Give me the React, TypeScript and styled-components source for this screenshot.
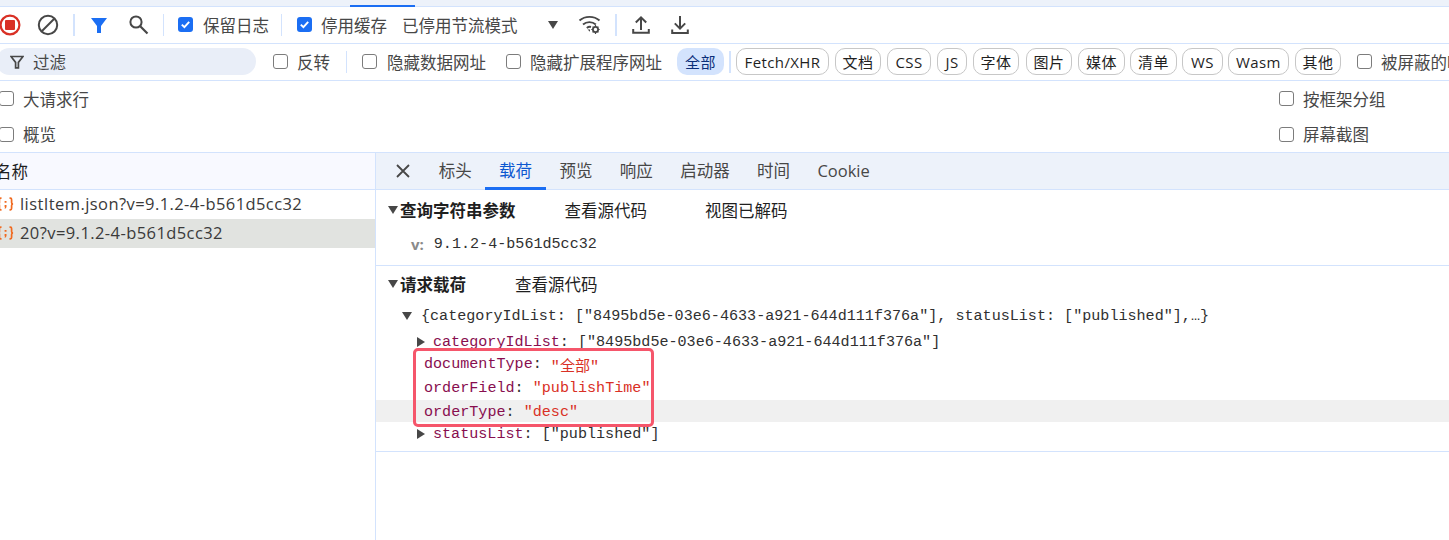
import React from "react";
import styled, { createGlobalStyle } from "styled-components";

const UI_FONT = `"Open Sans", "Noto Sans CJK SC", sans-serif`;
const MONO_FONT = `"Liberation Mono", "Noto Sans CJK SC", monospace`;

const GlobalStyle = createGlobalStyle`
  html, body { margin: 0; padding: 0; background: #fff; }
  body { font-family: ${UI_FONT}; font-size: 16.5px; color: #474747; }
`;

const Page = styled.div`
  width: 1449px;
  height: 540px;
  overflow: hidden;
  display: flex;
  flex-direction: column;
`;

const TopStrip = styled.div`
  height: 6px;
  flex: none;
  background: #edf2fa;
  border-bottom: 1px solid #d3e3fd;
`;

const TopMarker = styled.div`
  width: 65px;
  height: 2px;
  margin-left: 350px;
  padding-top: 5px;
  background: linear-gradient(#edf2fa 5px, #1b6ef3 5px);
`;

const Bar = styled.div`
  display: flex;
  align-items: center;
  flex: none;
  white-space: nowrap;
  height: 37px;
  box-sizing: border-box;
  padding-bottom: 1px;
  border-bottom: 1px solid #d3e3fd;
`;

const IconSlot = styled.span<{ $ml?: number; $w: number }>`
  display: flex;
  align-items: center;
  justify-content: center;
  flex: none;
  width: ${(p) => p.$w}px;
  margin-left: ${(p) => p.$ml ?? 0}px;
`;

const Sep = styled.span<{ $ml: number; $w?: number }>`
  flex: none;
  width: ${(p) => p.$w ?? 1}px;
  height: 22px;
  margin-left: ${(p) => p.$ml}px;
  background: #d3e3fd;
`;

const Box = styled.span<{ $on?: boolean; $ml?: number }>`
  display: flex;
  align-items: center;
  justify-content: center;
  flex: none;
  box-sizing: border-box;
  width: 15px;
  height: 15px;
  margin-left: ${(p) => p.$ml ?? 0}px;
  border-radius: 3px;
  border: ${(p) => (p.$on ? "none" : "1.5px solid #7c7c7c")};
  background: ${(p) => (p.$on ? "#1b6ef3" : "#fff")};
`;

const Label = styled.span<{ $ml?: number }>`
  margin-left: ${(p) => p.$ml ?? 9}px;
  color: #474747;
`;

const FilterInput = styled.div`
  display: flex;
  align-items: center;
  flex: none;
  box-sizing: border-box;
  width: 260px;
  height: 27px;
  margin-left: -4px;
  padding-left: 14px;
  border-radius: 14px;
  background: #e9eef8;
`;

const Pill = styled.span<{ $w: number; $ml?: number; $active?: boolean }>`
  display: flex;
  align-items: center;
  justify-content: center;
  flex: none;
  box-sizing: border-box;
  height: 27px;
  width: ${(p) => p.$w}px;
  margin-left: ${(p) => p.$ml ?? 6}px;
  border-radius: 10px;
  font-size: 15px;
  letter-spacing: 0.4px;
  color: ${(p) => (p.$active ? "#0b2f7a" : "#1f1f1f")};
  background: ${(p) => (p.$active ? "#d3e3fd" : "#fff")};
  border: ${(p) => (p.$active ? "none" : "1px solid #c7c7c7")};
`;

const OptionRow = styled.div<{ $h: number }>`
  display: flex;
  align-items: center;
  justify-content: space-between;
  flex: none;
  height: ${(p) => p.$h}px;
  padding-right: 62px;
`;

const OptionGroup = styled.div<{ $ml?: number }>`
  display: flex;
  align-items: center;
  width: 108px;
  white-space: nowrap;
  margin-left: ${(p) => p.$ml ?? 0}px;
`;

const Main = styled.div`
  display: flex;
  flex: 1;
  min-height: 0;
  border-top: 1px solid #d3e3fd;
`;

const NamesPane = styled.div`
  width: 376px;
  flex: none;
  box-sizing: border-box;
  border-right: 1px solid #d3e3fd;
`;

const NamesHeader = styled.div`
  height: 36px;
  box-sizing: border-box;
  display: flex;
  align-items: center;
  padding-bottom: 1px;
  background: #f8f9ff;
  color: #1f1f1f;
  & > span { margin-left: -5px; }
  border-bottom: none;
  margin-bottom: 1px;
  box-shadow: 0 1px 0 #d3e3fd;
`;

const RequestRow = styled.div<{ $selected?: boolean }>`
  display: flex;
  align-items: center;
  box-sizing: border-box;
  height: 29px;
  padding-bottom: 2px;
  white-space: nowrap;
  letter-spacing: 0.42px;
  color: #3a3a3a;
  background: ${(p) => (p.$selected ? "#e1e3e0" : "#fff")};
  & > svg { margin-left: -3px; flex: none; }
  & > span { margin-left: 6px; }
`;

const DetailPane = styled.div`
  flex: 1;
  min-width: 0;
  position: relative;
`;

const TabBar = styled.div`
  display: flex;
  align-items: stretch;
  height: 36px;
  background: #edf2fa;
  border-bottom: 1px solid #d3e3fd;
`;

const CloseSlot = styled.span`
  display: flex;
  align-items: center;
  justify-content: center;
  width: 49px;
  padding-left: 5px;
  flex: none;
  box-sizing: border-box;
`;

const Tab = styled.span<{ $active?: boolean }>`
  display: flex;
  align-items: center;
  box-sizing: border-box;
  padding: 0 13.7px;
  height: 37px;
  color: ${(p) => (p.$active ? "#0b57d0" : "#474747")};
  border-bottom: 3px solid ${(p) => (p.$active ? "#1b6ef3" : "transparent")};
`;

const Section = styled.section<{ $pb: number }>`
  border-bottom: 1px solid #d3e3fd;
  padding-bottom: ${(p) => p.$pb}px;
`;

const SectionHead = styled.div<{ $h: number }>`
  display: flex;
  align-items: center;
  height: ${(p) => p.$h}px;
  padding-left: 12px;
  white-space: nowrap;
`;

const Triangle = styled.span<{ $dir: "down" | "right" }>`
  flex: none;
  width: 0;
  height: 0;
  ${(p) =>
    p.$dir === "down"
      ? `border-left: 5px solid transparent; border-right: 5px solid transparent; border-top: 8px solid #474747;`
      : `border-top: 5px solid transparent; border-bottom: 5px solid transparent; border-left: 8px solid #474747;`}
`;

const HeadTitle = styled.b`
  font-weight: 700;
  color: #1f1f1f;
  margin-left: 2px;
`;

const HeadLink = styled.span<{ $ml: number }>`
  margin-left: ${(p) => p.$ml}px;
  color: #1f1f1f;
`;

const TreeRow = styled.div<{ $h?: number; $mt?: number; $indent: number; $hl?: boolean }>`
  display: flex;
  align-items: center;
  box-sizing: border-box;
  height: ${(p) => p.$h ?? 22}px;
  margin-top: ${(p) => p.$mt ?? 0}px;
  padding-left: ${(p) => p.$indent}px;
  padding-top: ${(p) => (p.$hl ? 2 : 0)}px;
  white-space: nowrap;
  font-family: ${MONO_FONT};
  font-size: 15.1px;
  color: #303030;
  background: ${(p) => (p.$hl ? "#f0f0f0" : "transparent")};
`;

const TreeText = styled.span<{ $ml?: number }>`
  margin-left: ${(p) => p.$ml ?? 0}px;
`;

const Key = styled.span`
  color: #880e4f;
`;

const Str = styled.span`
  color: #d93025;
`;

const ParamName = styled.b`
  font-family: ${UI_FONT};
  font-size: 15px;
  font-weight: 700;
  color: #8a8a8a;
  margin-right: 10px;
`;

const Annotation = styled.div`
  position: absolute;
  left: 37px;
  top: 195px;
  width: 241px;
  height: 79px;
  box-sizing: border-box;
  border: 3px solid #f5566b;
  border-radius: 5px;
  pointer-events: none;
`;

const Check = () => (
  <svg width="11" height="11" viewBox="0 0 11 11">
    <path d="M1.8 5.6 4.4 8.2 9.2 2.8" fill="none" stroke="#fff" strokeWidth="1.9" />
  </svg>
);

const StopIcon = () => (
  <svg width="22" height="22" viewBox="0 0 22 22" style={{ flex: "none" }}>
    <circle cx="11" cy="11" r="9.4" fill="none" stroke="#d93025" strokeWidth="2.2" />
    <rect x="6" y="6" width="10" height="10" rx="1" fill="#d93025" />
  </svg>
);

const ClearIcon = () => (
  <svg width="22" height="22" viewBox="0 0 22 22" style={{ flex: "none" }}>
    <circle cx="11" cy="11" r="9.2" fill="none" stroke="#474747" strokeWidth="2" />
    <path d="M5 17 17 5" stroke="#474747" strokeWidth="2" />
  </svg>
);

const FunnelFilled = () => (
  <svg width="18" height="18" viewBox="0 0 18 18">
    <path d="M1 2h16l-6 8v7H7v-7z" fill="#1b6ef3" />
  </svg>
);

const SearchIcon = () => (
  <svg width="21" height="21" viewBox="0 0 21 21">
    <circle cx="8" cy="8" r="5.6" fill="none" stroke="#474747" strokeWidth="2" />
    <path d="M12.2 12.2 19.5 19.5" stroke="#474747" strokeWidth="2.2" />
  </svg>
);

const WifiGearIcon = () => (
  <svg width="24" height="20" viewBox="0 0 24 20">
    <path d="M1.5 5.5C7 .6 16 .6 21.5 5.5" fill="none" stroke="#474747" strokeWidth="1.9" />
    <path d="M5 9.5c3.6-3.2 9.2-3.2 12.8 0" fill="none" stroke="#474747" strokeWidth="1.9" />
    <path d="M8.8 13c1.5-1.2 3-1.4 4.2-1" fill="none" stroke="#474747" strokeWidth="1.9" />
    <path d="M9.5 14.6h2.5v2.2z" fill="#474747" />
    <circle cx="17.5" cy="14.5" r="2.6" fill="none" stroke="#474747" strokeWidth="1.8" />
    <path d="M17.5 10v1.6M17.5 17.4V19M13.3 14.5h1.6M20.1 14.5h1.6M14.6 11.6l1 1M19.4 16.4l1 1M14.6 17.4l1-1M19.4 12.6l1-1" stroke="#474747" strokeWidth="1.2" />
  </svg>
);

const UploadIcon = () => (
  <svg width="18" height="20" viewBox="0 0 18 20">
    <path d="M9 15V2.5M3.8 7.5 9 2.3l5.2 5.2" fill="none" stroke="#474747" strokeWidth="2" />
    <path d="M1.2 14v3.8h15.6V14" fill="none" stroke="#474747" strokeWidth="2" />
  </svg>
);

const DownloadIcon = () => (
  <svg width="18" height="20" viewBox="0 0 18 20">
    <path d="M9 1v12.4M3.8 8.4 9 13.6l5.2-5.2" fill="none" stroke="#474747" strokeWidth="2" />
    <path d="M1.2 14.5v3.5h15.6v-3.5" fill="none" stroke="#474747" strokeWidth="2" />
  </svg>
);

const FunnelOutline = () => (
  <svg width="14" height="14" viewBox="0 0 14 14" style={{ flex: "none" }}>
    <path d="M1 1.5h12L8.4 7.4v5.4H5.6V7.4z" fill="none" stroke="#474747" strokeWidth="1.7" />
  </svg>
);

const CloseIcon = () => (
  <svg width="14" height="14" viewBox="0 0 14 14">
    <path d="M1 1 13 13M13 1 1 13" stroke="#474747" strokeWidth="1.8" />
  </svg>
);

const JsonIcon = () => (
  <svg width="17" height="16" viewBox="0 0 17 16">
    <path d="M4.5 2.2H3.6C2.6 2.2 2.4 2.8 2.4 3.8v2.6c0 1-.5 1.5-1.4 1.6.9.1 1.4.6 1.4 1.6v2.6c0 1 .2 1.6 1.2 1.6h.9" fill="none" stroke="#f06a20" strokeWidth="1.7" />
    <path d="M12.5 2.2h.9c1 0 1.2.6 1.2 1.6v2.6c0 1 .5 1.5 1.4 1.6-.9.1-1.4.6-1.4 1.6v2.6c0 1-.2 1.6-1.2 1.6h-.9" fill="none" stroke="#f06a20" strokeWidth="1.7" />
    <path d="M7.6 5h1.9v1.8H7.6zM7.6 9h1.9v1.9l-.8 1.6H7.5l.5-1.6h-.4z" fill="#f06a20" />
  </svg>
);

const types: { label: string; w: number; ml: number }[] = [
  { label: "Fetch/XHR", w: 93, ml: 5 },
  { label: "文档", w: 46, ml: 6 },
  { label: "CSS", w: 44, ml: 6 },
  { label: "JS", w: 30, ml: 6 },
  { label: "字体", w: 46, ml: 6 },
  { label: "图片", w: 46, ml: 7 },
  { label: "媒体", w: 47, ml: 6 },
  { label: "清单", w: 47, ml: 5 },
  { label: "WS", w: 41, ml: 5 },
  { label: "Wasm", w: 61, ml: 5 },
  { label: "其他", w: 46, ml: 6 },
];

const tabs = ["标头", "载荷", "预览", "响应", "启动器", "时间", "Cookie"];

export default function App() {
  return (
    <Page>
      <GlobalStyle />
      <TopStrip>
        <TopMarker />
      </TopStrip>

      <Bar>
        <IconSlot $w={20}>
          <StopIcon />
        </IconSlot>
        <IconSlot $w={22} $ml={17}>
          <ClearIcon />
        </IconSlot>
        <Sep $ml={14} $w={2} />
        <IconSlot $w={20} $ml={14}>
          <FunnelFilled />
        </IconSlot>
        <IconSlot $w={22} $ml={18}>
          <SearchIcon />
        </IconSlot>
        <Sep $ml={14} />
        <Box $on $ml={14}>
          <Check />
        </Box>
        <Label $ml={10}>保留日志</Label>
        <Sep $ml={12} />
        <Box $on $ml={15}>
          <Check />
        </Box>
        <Label>停用缓存</Label>
        <Label $ml={15}>已停用节流模式</Label>
        <IconSlot $w={10} $ml={30}>
          <Triangle $dir="down" />
        </IconSlot>
        <IconSlot $w={24} $ml={20}>
          <WifiGearIcon />
        </IconSlot>
        <Sep $ml={13} $w={2} />
        <IconSlot $w={18} $ml={15}>
          <UploadIcon />
        </IconSlot>
        <IconSlot $w={18} $ml={21}>
          <DownloadIcon />
        </IconSlot>
      </Bar>

      <Bar>
        <FilterInput>
          <FunnelOutline />
          <Label $ml={9}>过滤</Label>
        </FilterInput>
        <Box $ml={17} />
        <Label>反转</Label>
        <Sep $ml={16} />
        <Box $ml={15} />
        <Label $ml={10}>隐藏数据网址</Label>
        <Box $ml={20} />
        <Label>隐藏扩展程序网址</Label>
        <Pill $w={47} $ml={15} $active>
          全部
        </Pill>
        <Sep $ml={5} $w={2} />
        {types.map((t) => (
          <Pill key={t.label} $w={t.w} $ml={t.ml}>
            {t.label}
          </Pill>
        ))}
        <Box $ml={16} />
        <Label>被屏蔽的响应 Cookie</Label>
      </Bar>

      <OptionRow $h={35}>
        <OptionGroup $ml={-1}>
          <Box />
          <Label>大请求行</Label>
        </OptionGroup>
        <OptionGroup>
          <Box />
          <Label>按框架分组</Label>
        </OptionGroup>
      </OptionRow>
      <OptionRow $h={36}>
        <OptionGroup $ml={-1}>
          <Box />
          <Label>概览</Label>
        </OptionGroup>
        <OptionGroup>
          <Box />
          <Label>屏幕截图</Label>
        </OptionGroup>
      </OptionRow>

      <Main>
        <NamesPane>
          <NamesHeader>
            <span>名称</span>
          </NamesHeader>
          <RequestRow>
            <JsonIcon />
            <span>listItem.json?v=9.1.2-4-b561d5cc32</span>
          </RequestRow>
          <RequestRow $selected>
            <JsonIcon />
            <span>20?v=9.1.2-4-b561d5cc32</span>
          </RequestRow>
        </NamesPane>

        <DetailPane>
          <TabBar>
            <CloseSlot>
              <CloseIcon />
            </CloseSlot>
            {tabs.map((t) => (
              <Tab key={t} $active={t === "载荷"}>
                {t}
              </Tab>
            ))}
          </TabBar>

          <Section $pb={7}>
            <SectionHead $h={40}>
              <Triangle $dir="down" />
              <HeadTitle>查询字符串参数</HeadTitle>
              <HeadLink $ml={49}>查看源代码</HeadLink>
              <HeadLink $ml={58}>视图已解码</HeadLink>
            </SectionHead>
            <TreeRow $h={28} $indent={35}>
              <ParamName>v:</ParamName>
              <TreeText>9.1.2-4-b561d5cc32</TreeText>
            </TreeRow>
          </Section>

          <Section $pb={6}>
            <SectionHead $h={36}>
              <Triangle $dir="down" />
              <HeadTitle>请求载荷</HeadTitle>
              <HeadLink $ml={49}>查看源代码</HeadLink>
            </SectionHead>
            <TreeRow $indent={26} $mt={3}>
              <Triangle $dir="down" />
              <TreeText $ml={9}>
                {'{categoryIdList: ["8495bd5e-03e6-4633-a921-644d111f376a"], statusList: ["published"],…}'}
              </TreeText>
            </TreeRow>
            <TreeRow $indent={41} $mt={4}>
              <Triangle $dir="right" />
              <TreeText $ml={8}>
                <Key>categoryIdList</Key>: ["8495bd5e-03e6-4633-a921-644d111f376a"]
              </TreeText>
            </TreeRow>
            <TreeRow $indent={48}>
              <Key>documentType</Key>:&nbsp;<Str>"全部"</Str>
            </TreeRow>
            <TreeRow $indent={48} $mt={2}>
              <Key>orderField</Key>:&nbsp;<Str>"publishTime"</Str>
            </TreeRow>
            <TreeRow $indent={48} $mt={1} $hl>
              <Key>orderType</Key>:&nbsp;<Str>"desc"</Str>
            </TreeRow>
            <TreeRow $indent={41} $mt={1}>
              <Triangle $dir="right" />
              <TreeText $ml={8}>
                <Key>statusList</Key>: ["published"]
              </TreeText>
            </TreeRow>
          </Section>

          <Annotation />
        </DetailPane>
      </Main>
    </Page>
  );
}
